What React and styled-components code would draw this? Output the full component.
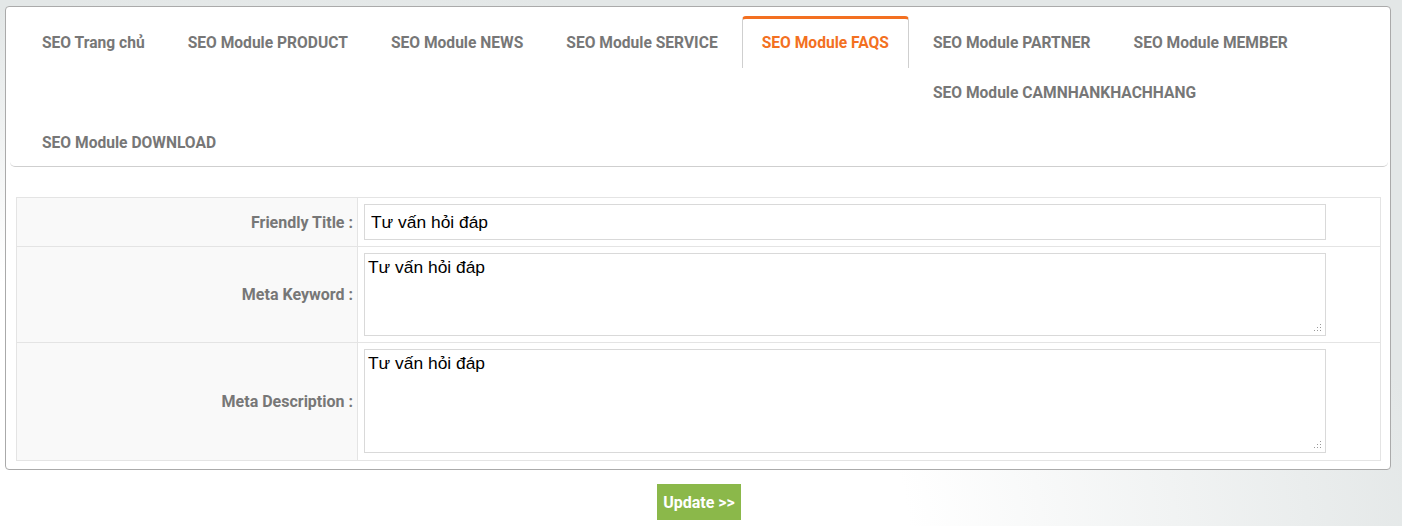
import React from "react";
import styled, { createGlobalStyle } from "styled-components";

const GlobalStyle = createGlobalStyle`
  html, body {
    margin: 0;
    padding: 0;
  }
  body {
    min-height: 526px;
    font-family: Roboto, "Liberation Sans", Arial, sans-serif;
    background: radial-gradient(ellipse 95% 120% at 22% 100%, #ffffff 0%, #ffffff 45%, #e3e7e7 85%);
  }
`;

const Page = styled.div`
  padding: 6px 11px 6px 5px;
`;

const Panel = styled.div`
  background: #fff;
  border: 1px solid #aaa;
  border-radius: 4px;
  padding: 0 2px 8px 4px;
`;

const TabBar = styled.div`
  display: flow-root;
  padding: 9px 12px 0;
  border-bottom: 1px solid #cfcfcf;
  border-radius: 0 0 5px 5px;
`;

const Tab = styled.div`
  float: left;
  margin-right: 3px;
  padding: 5px 20px 0;
  line-height: 45px;
  height: 50px;
  box-sizing: border-box;
  font-size: 15.6px;
  font-weight: 700;
  color: ${(p) => (p.$active ? "#f37021" : "#777")};
  cursor: pointer;
  white-space: nowrap;
  ${(p) =>
    p.$active &&
    `
    height: 52px;
    margin-left: 1px;
    margin-right: 4px;
    padding: 2px 19px 2px;
    border: 1px solid #cfcfcf;
    border-top: 3px solid #f37021;
    border-bottom: none;
    border-radius: 4px 4px 0 0;
    background: #fff;
  `}
`;

const FormWrap = styled.div`
  padding: 30px 7px 0 6px;
`;

const Table = styled.table`
  width: 100%;
  border-collapse: collapse;
  border: 1px solid #e4e4e4;
`;

const Row = styled.tr`
  border-bottom: 1px solid #e4e4e4;
`;

const Label = styled.td`
  width: 25%;
  background: #f9f9f9;
  border-right: 1px solid #e4e4e4;
  text-align: right;
  padding: 0 4px 0 0;
  font-size: 16px;
  font-weight: 700;
  color: #777;
  vertical-align: middle;
`;

const Field = styled.td`
  padding: ${(p) => p.$pad || "6px 0 6px 6px"};
  vertical-align: top;
`;

const TextInput = styled.input`
  display: block;
  width: 962px;
  height: 36px;
  box-sizing: border-box;
  border: 1px solid #d9d9d9;
  padding: 0 6px;
  font-family: "Liberation Sans", Arial, sans-serif;
  font-size: 17.4px;
  color: #000;
  outline: none;
  margin: 0;
`;

const AreaBox = styled.div`
  position: relative;
  width: 962px;
`;

const TextArea = styled.textarea`
  display: block;
  width: 100%;
  height: ${(p) => p.$h}px;
  box-sizing: border-box;
  border: 1px solid #d9d9d9;
  padding: 3px 3px 2px;
  font-family: "Liberation Sans", Arial, sans-serif;
  font-size: 17.4px;
  color: #000;
  outline: none;
  margin: 0;
  resize: none;
`;

const Grip = styled.svg`
  position: absolute;
  right: 4px;
  bottom: 4px;
  pointer-events: none;
`;

const Actions = styled.div`
  display: flex;
  justify-content: center;
  padding: 14px 0 0 2px;
`;

const Button = styled.button`
  background: #8bb84a;
  color: #fff;
  border: none;
  height: 36px;
  padding: 0 6px;
  font-family: Roboto, "Liberation Sans", Arial, sans-serif;
  font-size: 16px;
  font-weight: 700;
  cursor: pointer;
`;

const tabs = [
  "SEO Trang chủ",
  "SEO Module PRODUCT",
  "SEO Module NEWS",
  "SEO Module SERVICE",
  "SEO Module FAQS",
  "SEO Module PARTNER",
  "SEO Module MEMBER",
  "SEO Module CAMNHANKHACHHANG",
  "SEO Module DOWNLOAD",
];

const ResizeGrip = () => (
  <Grip width="9" height="9" viewBox="0 0 9 9">
    <g fill="#9a9a9a">
      <rect x="7" y="1" width="1" height="1" />
      <rect x="4" y="4" width="1" height="1" />
      <rect x="7" y="4" width="1" height="1" />
      <rect x="1" y="7" width="1" height="1" />
      <rect x="4" y="7" width="1" height="1" />
      <rect x="7" y="7" width="1" height="1" />
    </g>
  </Grip>
);

const Area = ({ h, value }) => (
  <AreaBox>
    <TextArea $h={h} defaultValue={value} />
    <ResizeGrip />
  </AreaBox>
);

export default function App() {
  const value = "Tư vấn hỏi đáp";
  return (
    <>
      <GlobalStyle />
      <Page>
        <Panel>
          <TabBar>
            {tabs.map((t) => (
              <Tab key={t} $active={t === "SEO Module FAQS"}>
                {t}
              </Tab>
            ))}
          </TabBar>
          <FormWrap>
            <Table>
              <tbody>
                <Row>
                  <Label>Friendly Title :</Label>
                  <Field>
                    <TextInput defaultValue={value} />
                  </Field>
                </Row>
                <Row>
                  <Label>Meta Keyword :</Label>
                  <Field>
                    <Area h={83} value={value} />
                  </Field>
                </Row>
                <Row>
                  <Label>Meta Description :</Label>
                  <Field $pad="6px 0 7px 6px">
                    <Area h={104} value={value} />
                  </Field>
                </Row>
              </tbody>
            </Table>
          </FormWrap>
        </Panel>
        <Actions>
          <Button>Update &gt;&gt;</Button>
        </Actions>
      </Page>
    </>
  );
}
